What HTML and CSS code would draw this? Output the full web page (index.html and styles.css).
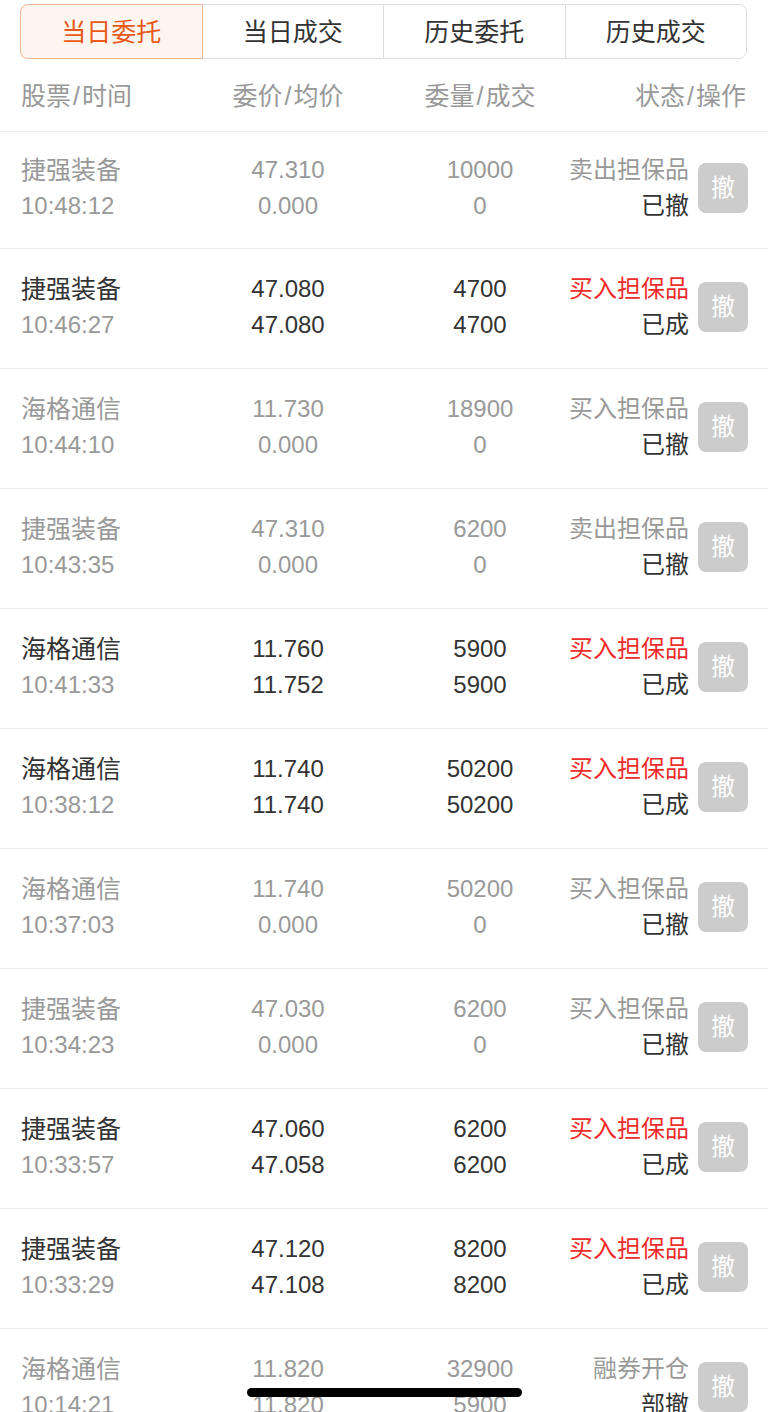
FILE: index.html
```html
<!DOCTYPE html>
<html lang="zh-CN">
<head>
<meta charset="utf-8">
<title>当日委托</title>
<link rel="stylesheet" href="styles.css">
</head>
<body>
<div class="page">
  <nav class="tabs">
    <div class="tab active">当日委托</div>
    <div class="tab">当日成交</div>
    <div class="tab">历史委托</div>
    <div class="tab">历史成交</div>
  </nav>

  <div class="grid head">
    <div class="c1">股票<span class="sl">/</span>时间</div>
    <div class="c2">委价<span class="sl">/</span>均价</div>
    <div class="c3">委量<span class="sl">/</span>成交</div>
    <div class="hc4">状态<span class="sl">/</span>操作</div>
  </div>

  <div class="list">
    <div class="grid row gray first">
      <div class="c1"><div>捷强装备</div><div class="num t">10:48:12</div></div>
      <div class="c2 num"><div>47.310</div><div>0.000</div></div>
      <div class="c3 num"><div>10000</div><div>0</div></div>
      <div class="c4"><div class="st"><div>卖出担保品</div><div class="s2">已撤</div></div><span class="btn">撤</span></div>
    </div>
    <div class="grid row">
      <div class="c1"><div>捷强装备</div><div class="num t">10:46:27</div></div>
      <div class="c2 num"><div>47.080</div><div>47.080</div></div>
      <div class="c3 num"><div>4700</div><div>4700</div></div>
      <div class="c4"><div class="st"><div class="red">买入担保品</div><div class="s2">已成</div></div><span class="btn">撤</span></div>
    </div>
    <div class="grid row gray">
      <div class="c1"><div>海格通信</div><div class="num t">10:44:10</div></div>
      <div class="c2 num"><div>11.730</div><div>0.000</div></div>
      <div class="c3 num"><div>18900</div><div>0</div></div>
      <div class="c4"><div class="st"><div>买入担保品</div><div class="s2">已撤</div></div><span class="btn">撤</span></div>
    </div>
    <div class="grid row gray">
      <div class="c1"><div>捷强装备</div><div class="num t">10:43:35</div></div>
      <div class="c2 num"><div>47.310</div><div>0.000</div></div>
      <div class="c3 num"><div>6200</div><div>0</div></div>
      <div class="c4"><div class="st"><div>卖出担保品</div><div class="s2">已撤</div></div><span class="btn">撤</span></div>
    </div>
    <div class="grid row">
      <div class="c1"><div>海格通信</div><div class="num t">10:41:33</div></div>
      <div class="c2 num"><div>11.760</div><div>11.752</div></div>
      <div class="c3 num"><div>5900</div><div>5900</div></div>
      <div class="c4"><div class="st"><div class="red">买入担保品</div><div class="s2">已成</div></div><span class="btn">撤</span></div>
    </div>
    <div class="grid row">
      <div class="c1"><div>海格通信</div><div class="num t">10:38:12</div></div>
      <div class="c2 num"><div>11.740</div><div>11.740</div></div>
      <div class="c3 num"><div>50200</div><div>50200</div></div>
      <div class="c4"><div class="st"><div class="red">买入担保品</div><div class="s2">已成</div></div><span class="btn">撤</span></div>
    </div>
    <div class="grid row gray">
      <div class="c1"><div>海格通信</div><div class="num t">10:37:03</div></div>
      <div class="c2 num"><div>11.740</div><div>0.000</div></div>
      <div class="c3 num"><div>50200</div><div>0</div></div>
      <div class="c4"><div class="st"><div>买入担保品</div><div class="s2">已撤</div></div><span class="btn">撤</span></div>
    </div>
    <div class="grid row gray">
      <div class="c1"><div>捷强装备</div><div class="num t">10:34:23</div></div>
      <div class="c2 num"><div>47.030</div><div>0.000</div></div>
      <div class="c3 num"><div>6200</div><div>0</div></div>
      <div class="c4"><div class="st"><div>买入担保品</div><div class="s2">已撤</div></div><span class="btn">撤</span></div>
    </div>
    <div class="grid row">
      <div class="c1"><div>捷强装备</div><div class="num t">10:33:57</div></div>
      <div class="c2 num"><div>47.060</div><div>47.058</div></div>
      <div class="c3 num"><div>6200</div><div>6200</div></div>
      <div class="c4"><div class="st"><div class="red">买入担保品</div><div class="s2">已成</div></div><span class="btn">撤</span></div>
    </div>
    <div class="grid row">
      <div class="c1"><div>捷强装备</div><div class="num t">10:33:29</div></div>
      <div class="c2 num"><div>47.120</div><div>47.108</div></div>
      <div class="c3 num"><div>8200</div><div>8200</div></div>
      <div class="c4"><div class="st"><div class="red">买入担保品</div><div class="s2">已成</div></div><span class="btn">撤</span></div>
    </div>
    <div class="grid row gray">
      <div class="c1"><div>海格通信</div><div class="num t">10:14:21</div></div>
      <div class="c2 num"><div>11.820</div><div>11.820</div></div>
      <div class="c3 num"><div>32900</div><div>5900</div></div>
      <div class="c4"><div class="st"><div>融券开仓</div><div class="s2">部撤</div></div><span class="btn">撤</span></div>
    </div>
  </div>
</div>
<div class="home-indicator"></div>
</body>
</html>
```

FILE: styles.css
```css
html, body {
  margin: 0;
  padding: 0;
  height: 100%;
  overflow: hidden;
  background: #ffffff;
}

body {
  font-family: "Liberation Sans", "Noto Sans CJK SC", sans-serif;
  font-size: 25px;
  color: #333333;
}

.tabs {
  display: flex;
  box-sizing: border-box;
  height: 55px;
  margin: 4px 21px 0 20px;
  border: 1px solid #dedede;
  border-radius: 8px;
}

.tab {
  flex: 1;
  display: flex;
  align-items: center;
  justify-content: center;
  padding-bottom: 3px;
  border-left: 1px solid #dedede;
  font-size: 25px;
  color: #333333;
}

.tab.active {
  margin: -1px 0 -1px -1px;
  border: 1px solid #f3b996;
  border-radius: 8px 0 0 8px;
  background: #fdf5f0;
  color: #e8591a;
}

.tab.active + .tab {
  border-left: none;
}

.grid {
  display: grid;
  grid-template-columns: 155px 224px 160px 1fr;
  align-items: center;
  padding: 0 20px 0 21px;
}

.head {
  box-sizing: border-box;
  height: 73px;
  padding-bottom: 2px;
  border-bottom: 1px solid #eeeeee;
  color: #999999;
}

.sl {
  margin: 0 2px;
}

.c1 { text-align: left; }
.c2, .c3 { text-align: center; }
.c4 {
  display: flex;
  justify-content: flex-end;
  align-items: center;
  gap: 9px;
  text-align: right;
}

.hc4 {
  text-align: right;
  padding-right: 2px;
}

.row {
  box-sizing: border-box;
  height: 120px;
  padding-bottom: 4px;
  border-bottom: 1px solid #eeeeee;
  line-height: 36px;
}

.row.first {
  height: 117px;
}

.num {
  font-size: 24px;
}

.st {
  font-size: 24px;
}

.t {
  color: #999999;
}

.row.gray .c1,
.row.gray .c2,
.row.gray .c3,
.row.gray .st > div:first-child {
  color: #999999;
}

.s2 {
  color: #333333;
}

.red {
  color: #ef2b2b;
}

.btn {
  display: flex;
  align-items: center;
  justify-content: center;
  width: 50px;
  height: 50px;
  border-radius: 8px;
  background: #cccccc;
  color: #ffffff;
  font-size: 24px;
}

.home-indicator {
  position: fixed;
  left: 247px;
  bottom: 15px;
  width: 275px;
  height: 9px;
  border-radius: 5px;
  background: #000000;
}
```
